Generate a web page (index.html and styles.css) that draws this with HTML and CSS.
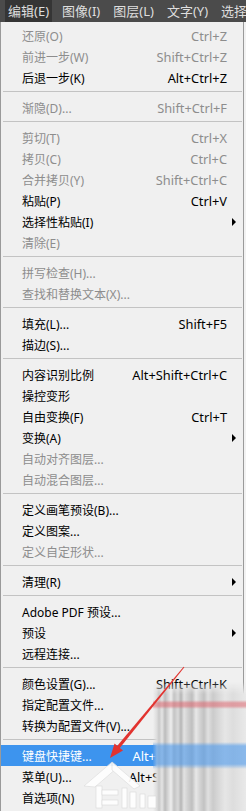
FILE: index.html
```html
<!DOCTYPE html>
<html lang="zh-CN">
<head>
  <meta charset="UTF-8">
  <meta name="viewport" content="width=device-width, initial-scale=1">
  <title>编辑菜单</title>
  <link rel="stylesheet" href="styles.css">
</head>
<body>
  <div class="menubar">
    <span class="top on">编辑(E)</span>
    <span class="top">图像(I)</span>
    <span class="top">图层(L)</span>
    <span class="top">文字(Y)</span>
    <span class="top">选择</span>
  </div>

  <div class="menu">
    <div class="item off"><span class="label">还原(O)</span><span class="key">Ctrl+Z</span></div>
    <div class="item off"><span class="label">前进一步(W)</span><span class="key">Shift+Ctrl+Z</span></div>
    <div class="item"><span class="label">后退一步(K)</span><span class="key">Alt+Ctrl+Z</span></div>
    <div class="sep"></div>
    <div class="item off"><span class="label">渐隐(D)...</span><span class="key">Shift+Ctrl+F</span></div>
    <div class="sep"></div>
    <div class="item off"><span class="label">剪切(T)</span><span class="key">Ctrl+X</span></div>
    <div class="item off"><span class="label">拷贝(C)</span><span class="key">Ctrl+C</span></div>
    <div class="item off"><span class="label">合并拷贝(Y)</span><span class="key">Shift+Ctrl+C</span></div>
    <div class="item"><span class="label">粘贴(P)</span><span class="key">Ctrl+V</span></div>
    <div class="item sub"><span class="label">选择性粘贴(I)</span></div>
    <div class="item off"><span class="label">清除(E)</span></div>
    <div class="sep"></div>
    <div class="item off"><span class="label">拼写检查(H)...</span></div>
    <div class="item off"><span class="label">查找和替换文本(X)...</span></div>
    <div class="sep"></div>
    <div class="item"><span class="label">填充(L)...</span><span class="key">Shift+F5</span></div>
    <div class="item"><span class="label">描边(S)...</span></div>
    <div class="sep"></div>
    <div class="item"><span class="label">内容识别比例</span><span class="key">Alt+Shift+Ctrl+C</span></div>
    <div class="item"><span class="label">操控变形</span></div>
    <div class="item"><span class="label">自由变换(F)</span><span class="key">Ctrl+T</span></div>
    <div class="item sub"><span class="label">变换(A)</span></div>
    <div class="item off"><span class="label">自动对齐图层...</span></div>
    <div class="item off"><span class="label">自动混合图层...</span></div>
    <div class="sep"></div>
    <div class="item"><span class="label">定义画笔预设(B)...</span></div>
    <div class="item"><span class="label">定义图案...</span></div>
    <div class="item off"><span class="label">定义自定形状...</span></div>
    <div class="sep"></div>
    <div class="item sub"><span class="label">清理(R)</span></div>
    <div class="sep"></div>
    <div class="item"><span class="label">Adobe PDF 预设...</span></div>
    <div class="item sub"><span class="label">预设</span></div>
    <div class="item"><span class="label">远程连接...</span></div>
    <div class="sep"></div>
    <div class="item"><span class="label">颜色设置(G)...</span><span class="key">Shift+Ctrl+K</span></div>
    <div class="item"><span class="label">指定配置文件...</span></div>
    <div class="item"><span class="label">转换为配置文件(V)...</span></div>
    <div class="sep"></div>
    <div class="item hot"><span class="label">键盘快捷键...</span><span class="key">Alt+Shift+Ctrl+K</span></div>
    <div class="item"><span class="label">菜单(U)...</span><span class="key">Alt+Shift+Ctrl+M</span></div>
    <div class="item"><span class="label">首选项(N)</span><span class="key">Ctrl+K</span></div>
  </div>

  <!-- blurred corner of the screenshot -->
  <div class="smear"></div>

  <!-- red pointer arrow -->
  <svg class="arrow" width="90" height="105" viewBox="0 0 90 105">
    <polygon points="17.4,91.1 14.6,88.9 83.6,6.7 84.4,7.3" fill="#e2332f"/>
    <polygon points="10,98 23,90.5 14.5,83.5" fill="#e2332f"/>
  </svg>

  <!-- watermark logo -->
  <svg class="mark" width="80" height="58" viewBox="0 0 80 58">
    <g fill="#fff" stroke="#d6d6d6" stroke-width="0.6">
      <polygon points="2,30 30,6 36,11 13,31"/>
      <polygon points="30,6 58,30 52,33 30,14"/>
      <rect x="14" y="30" width="6" height="22"/>
      <rect x="20" y="34" width="16" height="5"/>
      <rect x="20" y="44" width="16" height="5"/>
      <rect x="40" y="32" width="5" height="20"/>
      <rect x="48" y="36" width="6" height="16"/>
      <rect x="58" y="38" width="5" height="14"/>
      <rect x="66" y="40" width="8" height="12"/>
    </g>
  </svg>
</body>
</html>
```

FILE: styles.css
```css
body {
  margin: 0;
  background: #f2f2f2;
  font-family: "Noto Sans", "Noto Sans CJK SC", sans-serif;
  position: relative;
  height: 811px;
  overflow: hidden;
}
.menubar {
  height: 22px;
  background: #4b4b4b;
  padding-left: 5px;
  display: flex;
  align-items: center;
  white-space: nowrap;
  overflow: hidden;
}
.top {
  color: #dedede;
  font-size: 13px;
  line-height: 22px;
  padding: 0 3px;
  margin-right: 7px;
}
.top.on {
  background: #353535;
}
.menu {
  width: 242px;
  background: #f0f0f0;
  border-left: 1px solid #9a9a9a;
  border-right: 1px solid #9a9a9a;
  padding-top: 3px;
  height: 786px;
}
.item {
  display: flex;
  align-items: center;
  height: 21px;
  padding-left: 21px;
  font-size: 12px;
  color: #000;
  white-space: nowrap;
}
.item::after {
  content: "";
  flex: 0 0 16px;
}
.item.sub::after {
  flex: 0 0 0;
  width: 0;
  height: 0;
  border-left: 4px solid #000;
  border-top: 4px solid transparent;
  border-bottom: 4px solid transparent;
  margin: 0 7px 0 5px;
}
.item.off {
  color: #8d8d8d;
}
.item.hot {
  background: #3d94ee;
  color: #fff;
}
.label {
  flex: 1;
}
.key {
  font-size: 12.8px;
}
.sep {
  height: 9px;
  box-sizing: border-box;
  margin: 0 1px 0 2px;
  padding-top: 3px;
}
.sep::before {
  content: "";
  display: block;
  border-top: 1px solid #c3c3c3;
}
.smear {
  position: absolute;
  left: 153px;
  top: 682px;
  width: 93px;
  height: 129px;
  background:
    linear-gradient(to bottom, transparent 18px, rgba(222, 92, 102, .5) 21px, rgba(222, 92, 102, .5) 24px, transparent 27px),
    linear-gradient(to bottom, transparent 60px, rgba(74, 152, 236, .6) 64px, rgba(74, 152, 236, .6) 82px, transparent 87px),
    linear-gradient(to right, rgba(225, 225, 225, 0) 0, #dcdcdc 4px, #c9c9c9 6px, #e4e4e4 9px, #bcbcbc 12px, #d6d6d6 15px, #eeeeee 18px, #c4c4c4 21px, #dadada 25px, #b6b6b6 28px, #e2e2e2 31px, #cfcfcf 35px, #bfbfbf 39px, #e8e8e8 43px, #d3d3d3 47px, #c2c2c2 51px, #e0e0e0 55px, #cbcbcb 60px, #d9d9d9 66px, #e6e6e6 72px, #dddddd 80px, #e9e9e9 93px);
  -webkit-mask-image: linear-gradient(to bottom, transparent 0, #000 12px);
  mask-image: linear-gradient(to bottom, transparent 0, #000 12px);
}
.arrow {
  position: absolute;
  left: 100px;
  top: 660px;
}
.mark {
  position: absolute;
  left: 82px;
  top: 756px;
  opacity: .92;
}
```
